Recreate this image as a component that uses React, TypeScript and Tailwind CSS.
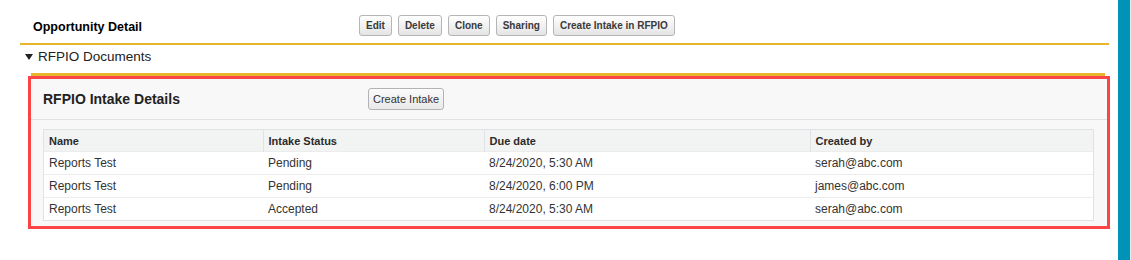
const actions = ["Edit", "Delete", "Clone", "Sharing", "Create Intake in RFPIO"];

const intakes = [
  { name: "Reports Test", status: "Pending", due: "8/24/2020, 5:30 AM", createdBy: "serah@abc.com" },
  { name: "Reports Test", status: "Pending", due: "8/24/2020, 6:00 PM", createdBy: "james@abc.com" },
  { name: "Reports Test", status: "Accepted", due: "8/24/2020, 5:30 AM", createdBy: "serah@abc.com" },
];

const columns = ["Name", "Intake Status", "Due date", "Created by"];

export default function App() {
  return (
    <div className="flex w-[1131px] h-[260px] bg-white font-['Liberation_Sans',Arial,sans-serif] overflow-hidden">
      <div className="flex-1 pl-[20px] pr-[9px]">
        {/* page block header */}
        <div className="pt-[15px] pb-[7px] border-b-2 border-[#e8b52f]">
          <div className="flex items-center h-[21px]">
            <h2 className="w-[339px] pl-[13px] pt-[4px] text-[12.5px] font-bold text-black">Opportunity Detail</h2>
            <div className="flex gap-[6px]">
              {actions.map((label) => (
                <button
                  key={label}
                  className="h-[21px] px-[6px] rounded-[3px] border border-[#b5b5b5] bg-linear-to-b from-white to-[#e4e4e4] text-[10px] font-bold text-[#3a3a3a]"
                >
                  {label}
                </button>
              ))}
            </div>
          </div>
        </div>

        {/* section toggle */}
        <div className="flex items-center pt-[4px] pl-[5px] h-[19px]">
          <svg width="8" height="6" viewBox="0 0 8 6" className="mr-[5px]">
            <polygon points="0,0 8,0 4,6" fill="#222" />
          </svg>
          <span className="text-[13.5px] leading-[16px] text-[#222]">RFPIO Documents</span>
        </div>

        <div className="mt-[9px] ml-[11px] mr-[4px] h-[3px] bg-[#e8b52f]" />

        {/* intake panel */}
        <div className="ml-[8px] -mr-[1px] border-[3px] border-[#fb4446] bg-[#f8f8f8]">
          <div className="flex items-center h-[41px] pl-[12px] border-b border-[#e2e2e2]">
            <h3 className="w-[325px] text-[14px] font-bold text-[#222]">RFPIO Intake Details</h3>
            <button className="h-[22px] px-[4px] rounded-[3px] border border-[#b3b3b3] bg-linear-to-b from-[#fbfbfb] to-[#e9e9e9] text-[11px] text-[#333]">
              Create Intake
            </button>
          </div>

          <div className="mt-[9px] ml-[12px] mr-[13px] mb-[5px] border border-[#e0e3e5] bg-white">
            <table className="w-full border-collapse text-[12px] text-[#333]">
              <colgroup>
                <col className="w-[219px]" />
                <col className="w-[221px]" />
                <col className="w-[326px]" />
                <col />
              </colgroup>
              <thead>
                <tr className="h-[21px] bg-[#f2f3f3]">
                  {columns.map((col, i) => (
                    <th
                      key={col}
                      className={`text-left font-bold text-[11px] text-[#2b2b2b] px-[5px] pt-[2px] pb-0 ${i > 0 ? "border-l border-[#e0e3e5]" : ""}`}
                    >
                      {col}
                    </th>
                  ))}
                </tr>
              </thead>
              <tbody>
                {intakes.map((row, i) => (
                  <tr key={i} className="h-[23px] border-t border-[#ececec]">
                    <td className="px-[5px] py-0">{row.name}</td>
                    <td className="px-[5px] py-0">{row.status}</td>
                    <td className="px-[5px] py-0">{row.due}</td>
                    <td className="px-[5px] py-0">{row.createdBy}</td>
                  </tr>
                ))}
              </tbody>
            </table>
          </div>
        </div>
      </div>

      {/* scrollbar strip */}
      <div className="w-[12px] bg-[#0093b8]" />
      <div className="w-[1px] bg-[#ececec]" />
    </div>
  );
}
